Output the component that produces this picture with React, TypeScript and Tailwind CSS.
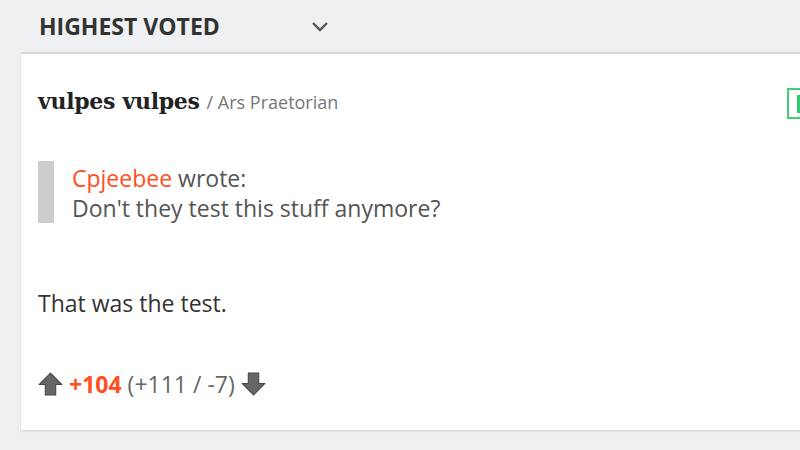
import React from 'react';

function ArrowUp() {
  return (
    <svg width="25" height="26" viewBox="0 0 24 24" className="shrink-0">
      <path d="M12 1.5 L23 12.5 L17 12.5 L17 22.5 L7 22.5 L7 12.5 L1 12.5 Z" fill="#666" stroke="#444" strokeWidth="1" strokeLinejoin="round" />
    </svg>
  );
}

function ArrowDown() {
  return (
    <svg width="25" height="26" viewBox="0 0 24 24" className="shrink-0">
      <path d="M12 22.5 L23 11.5 L17 11.5 L17 1.5 L7 1.5 L7 11.5 L1 11.5 Z" fill="#666" stroke="#444" strokeWidth="1" strokeLinejoin="round" />
    </svg>
  );
}

export default function App() {
  return (
    <div className="w-[800px] h-[450px] overflow-hidden bg-[#eff0f1] font-['Open_Sans',sans-serif]">
      {/* sort header */}
      <div className="h-[52px] flex items-center pl-[39px]">
        <span className="text-[23px] font-bold text-[#333]">HIGHEST VOTED</span>
        <svg width="18" height="12" viewBox="0 0 18 12" className="ml-[91px] mt-[2px]">
          <path d="M2 2 L9 9 L16 2" fill="none" stroke="#555" strokeWidth="2.4" />
        </svg>
      </div>

      {/* comment card */}
      <div className="ml-[21px] w-[800px] h-[378px] bg-white border-t-2 border-[#d6d7d8] shadow-[0_1px_2px_rgba(0,0,0,0.15)] relative">
        <div className="pl-[17px] pt-[31px] flex items-baseline">
          <span className="font-['DejaVu_Serif',serif] font-bold text-[22px] text-[#222] tracking-[-0.3px]">vulpes vulpes</span>
          <span className="ml-[7px] text-[18px] text-[#777]">/ Ars Praetorian</span>
        </div>

        <div className="absolute left-[766px] top-[34px] w-[20px] h-[31px] border-2 border-[#3ccf73] p-[3px]">
          <div className="w-[8px] h-[18px] bg-[#2ecc71] ml-[5px] mt-[2px]" />
        </div>

        <div className="ml-[17px] mt-[43px] flex">
          <div className="w-[16px] h-[62px] bg-[#cccccc]" />
          <div className="ml-[18px] text-[23px] leading-[30px] text-[#555] mt-[2px]">
            <div>
              <span className="text-[#ff4f1f]">Cpjeebee</span> wrote:
            </div>
            <div>Don't they test this stuff anymore?</div>
          </div>
        </div>

        <div className="ml-[17px] mt-[65px] text-[23px] leading-[30px] text-[#333]">That was the test.</div>

        <div className="ml-[17px] mt-[51px] h-[30px] flex items-center text-[23px] leading-[30px]">
          <ArrowUp />
          <span className="ml-[6px] font-bold text-[#ff4f1f]">+104</span>
          <span className="ml-[6px] text-[#666]">(+111 / -7)</span>
          <span className="ml-[6px] flex">
            <ArrowDown />
          </span>
        </div>
      </div>
    </div>
  );
}
